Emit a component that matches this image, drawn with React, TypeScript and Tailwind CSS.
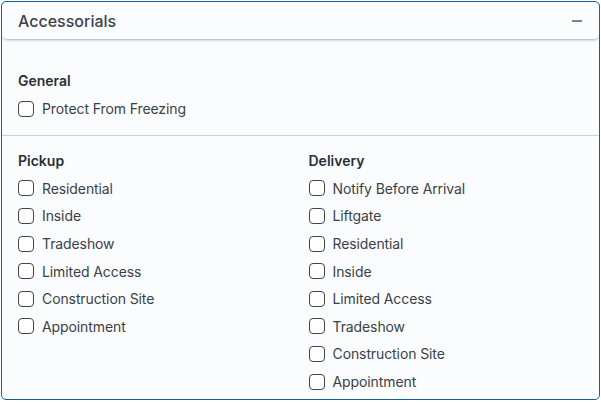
import React from "react";

const pickup = ["Residential", "Inside", "Tradeshow", "Limited Access", "Construction Site", "Appointment"];
const delivery = [
  "Notify Before Arrival",
  "Liftgate",
  "Residential",
  "Inside",
  "Limited Access",
  "Tradeshow",
  "Construction Site",
  "Appointment",
];

function Check({ label }: { label: string }) {
  return (
    <label className="flex h-[27.6px] items-center gap-[8px] text-[14px] tracking-[-0.1px] text-[#3a3f49]">
      <span className="h-[16px] w-[16px] shrink-0 rounded-[4px] border-[1.5px] border-[#3f4550] bg-white" />
      <span>{label}</span>
    </label>
  );
}

function Heading({ children }: { children: React.ReactNode }) {
  return <div className="mb-[4px] h-[20px] text-[14px] font-semibold leading-[20px] text-[#2a2f37]">{children}</div>;
}

export default function App() {
  return (
    <div className="h-[403px] w-[601px] bg-white pl-[1px] pt-[1px]" style={{ fontFamily: "Inter, 'Noto Sans', sans-serif" }}>
      <div className="h-[399px] w-[599px] rounded-[5px] border-[1.5px] border-[#11609a] bg-[#fbfcfe]">
        <div className="flex h-[38px] items-center justify-between rounded-[5px] border-b border-[#b9cad6] px-[16px] shadow-[0_1px_2px_rgba(120,150,170,0.35)]">
          <span className="text-[16px] font-medium text-[#3b424d]">Accessorials</span>
          <span className="mr-[1px] block h-[2px] w-[10px] bg-[#7c828b]" />
        </div>
        <div className="px-[16px] pb-[12px] pt-[31px]">
          <Heading>General</Heading>
          <Check label="Protect From Freezing" />
        </div>
        <div className="border-t border-[#c6d4dd]" />
        <div className="grid grid-cols-2 gap-x-[16px] px-[16px] pt-[15px]">
          <div>
            <Heading>Pickup</Heading>
            {pickup.map((p) => (
              <Check key={p} label={p} />
            ))}
          </div>
          <div>
            <Heading>Delivery</Heading>
            {delivery.map((p) => (
              <Check key={p} label={p} />
            ))}
          </div>
        </div>
      </div>
    </div>
  );
}
